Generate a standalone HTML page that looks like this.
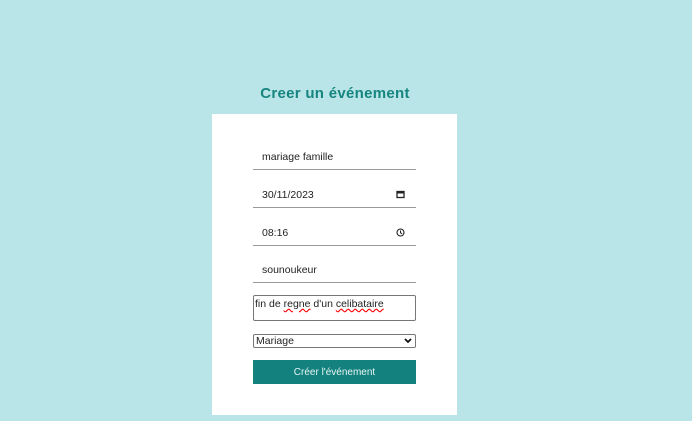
<!DOCTYPE html><html><head><style>
body{margin:0;width:692px;height:421px;background:#b9e5e8;font-family:"Liberation Sans",sans-serif;position:relative;overflow:hidden}
.a{position:absolute}
h1{position:absolute;left:0;width:670px;text-align:center;top:85px;margin:0;font-size:15px;color:#16857f;font-weight:bold;letter-spacing:0.3px}
.card{left:212px;top:114px;width:245px;height:301px;background:#fff}
.f{left:253px;width:163px;border-bottom:1px solid #999;font-size:10.5px;color:#222}
.f span{position:absolute;left:9px;top:0}
</style></head><body>
<h1>Creer un événement</h1>
<div class="a card"></div>
<div class="a f" style="top:151px;height:18px"><span>mariage famille</span></div>
<div class="a f" style="top:189px;height:18px"><span>30/11/2023</span><svg class="a" style="left:143px;top:1px" width="9" height="9"><rect x="1" y="1.5" width="7" height="6" fill="none" stroke="#222" stroke-width="1.3"/><rect x="1" y="1.5" width="7" height="2" fill="#222"/></svg></div>
<div class="a f" style="top:227px;height:18px"><span>08:16</span><svg class="a" style="left:143px;top:1px" width="9" height="9"><circle cx="4.5" cy="4.5" r="3.5" fill="none" stroke="#222" stroke-width="1.1"/><path d="M4.5 2.5V4.7L6 5.8" fill="none" stroke="#222"/></svg></div>
<div class="a f" style="top:264px;height:18px"><span>sounoukeur</span></div>
<div class="a" style="left:253px;top:295px;width:163px;height:26px;border:1px solid #777;border-radius:2px;font-size:10.5px;color:#222;padding:2px 1px;box-sizing:border-box">fin de <span style="text-decoration:underline wavy red">regne</span> d'un <span style="text-decoration:underline wavy red">celibataire</span></div>
<div class="a" style="left:253px;top:334px;width:163px;height:14px;border:1px solid #777;border-radius:2px;font-size:10.5px;line-height:12px;color:#222;padding-left:2px;box-sizing:border-box">Mariage<svg class="a" style="left:150px;top:3px" width="8" height="6"><path d="M1 1L4 4L7 1" fill="none" stroke="#111" stroke-width="1.8"/></svg></div>
<div class="a" style="left:253px;top:360px;width:163px;height:24px;background:#13827e;color:#e6f5f4;font-size:10px;text-align:center;line-height:25px">Créer l'événement</div>
</body></html>
